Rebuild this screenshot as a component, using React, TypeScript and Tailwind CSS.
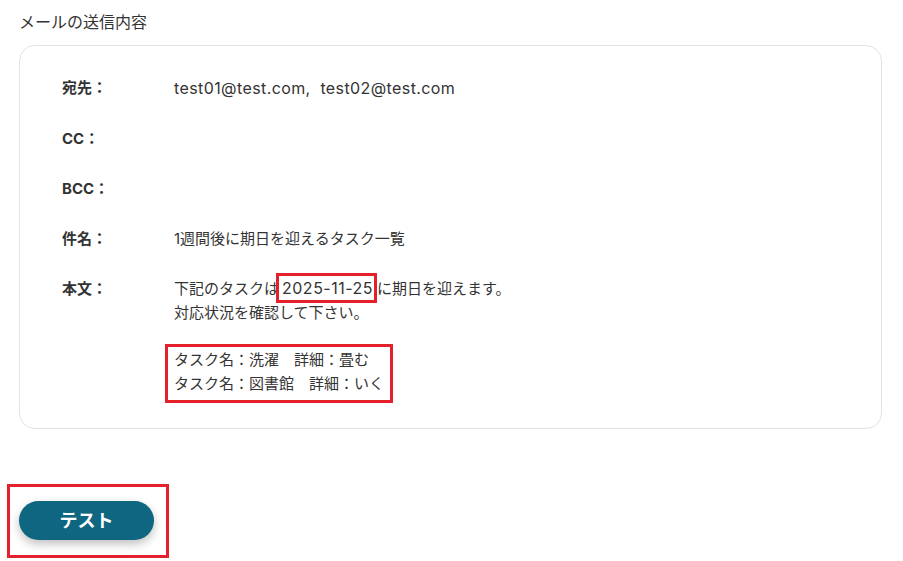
import React from "react";

const font = { fontFamily: 'Inter, "Noto Sans CJK JP", sans-serif' };

function Row({ label, children }: { label: string; children?: React.ReactNode }) {
  return (
    <div className="flex">
      <div className="w-[112px] shrink-0 font-bold text-[15px] leading-[24px] text-[#333]">{label}</div>
      <div className="text-[15px] leading-[24px] text-[#333]">{children}</div>
    </div>
  );
}

export default function App() {
  return (
    <div className="w-[903px] h-[561px] bg-white relative overflow-hidden" style={font}>
      <div className="pl-[19px] pr-[21px] pt-[10px]">
        <div className="text-[16px] leading-[24px] text-[#333]">メールの送信内容</div>
        <div className="mt-[11px] border border-[#e3e3e3] rounded-[16px] pl-[42px] pt-[30px] pb-[25px] flex flex-col gap-[26px]">
          <Row label="宛先：">
            <span className="text-[16px] tracking-[0.4px]">test01@test.com,&nbsp; test02@test.com</span>
          </Row>
          <Row label="CC：" />
          <Row label="BCC：" />
          <Row label="件名：">1週間後に期日を迎えるタスク一覧</Row>
          <Row label="本文：">
            <div>
              下記のタスクは
              <span className="inline-block ml-[-3px] border-[3px] border-[#e4202a] pl-[3px] pr-[1px] my-[-6px] leading-[24px] text-[16px] tracking-[0.5px]">
                2025-11-25
              </span>
              に期日を迎えます。
            </div>
            <div>対応状況を確認して下さい。</div>
            <div className="mt-[19px] ml-[-9px] inline-block border-[3px] border-[#e4202a] pl-[6px] pr-[6px] pt-[1px] pb-[4px]">
              <div>タスク名：洗濯　詳細：畳む</div>
              <div>タスク名：図書館　詳細：いく</div>
            </div>
          </Row>
        </div>
      </div>
      <div className="absolute left-[7px] top-[484px] w-[162px] h-[74px] border-[3px] border-[#e4202a] pointer-events-none" />
      <div className="absolute left-[19px] top-[501px]">
        <button className="w-[135px] h-[39px] rounded-full bg-[#0e6680] text-white font-bold text-[18px] shadow-[0_4px_10px_rgba(0,0,0,0.25)]">
          テスト
        </button>
      </div>
    </div>
  );
}
